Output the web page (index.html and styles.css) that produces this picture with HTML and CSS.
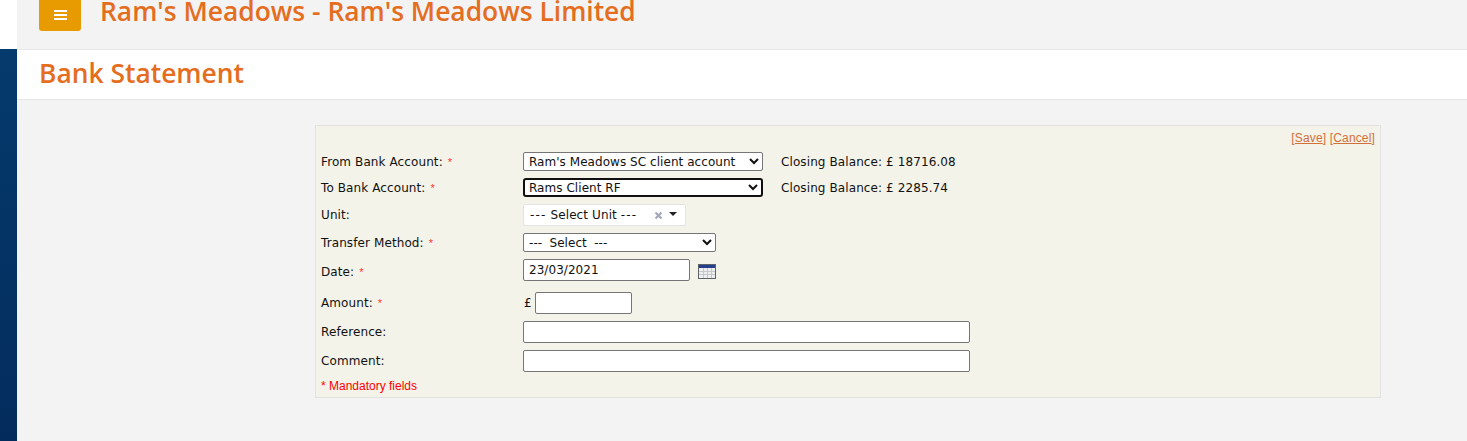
FILE: index.html
```html
<!DOCTYPE html>
<html lang="en">
<head>
    <meta charset="UTF-8">
    <title>Bank Statement</title>
    <link rel="stylesheet" href="styles.css">
</head>
<body>
    <div class="sidebar">
        <div class="sidebar-top"></div>
        <div class="sidebar-nav"></div>
    </div>
    <div class="main">
        <div class="topbar">
            <a class="menu-btn" href="#">
                <span></span><span></span><span></span>
            </a>
            <h2 class="site-title">Ram's Meadows - Ram's Meadows Limited</h2>
        </div>
        <div class="page-head">
            <h1>Bank Statement</h1>
        </div>
        <div class="content">
            <form class="panel">
                <div class="actions">
                    <a href="#">[<u>Save</u>]</a> <a href="#">[<u>Cancel</u>]</a>
                </div>
                <div class="row row-from">
                    <label>From Bank Account: <i>*</i></label>
                    <select class="sel-account"><option>Ram's Meadows SC client account</option></select>
                    <span class="balance">Closing Balance: £ 18716.08</span>
                </div>
                <div class="row row-to">
                    <label>To Bank Account: <i>*</i></label>
                    <select class="sel-account focused"><option>Rams Client RF</option></select>
                    <span class="balance">Closing Balance: £ 2285.74</span>
                </div>
                <div class="row row-unit">
                    <label>Unit:</label>
                    <div class="combo">
                        <span class="combo-text"><b>---</b> Select Unit <b>---</b></span>
                        <svg class="combo-x" width="9" height="9" viewBox="0 0 9 9"><path d="M1.5 1.5l6 6M7.5 1.5l-6 6" stroke="#a2a8b8" stroke-width="2.2" fill="none"/></svg>
                        <span class="combo-arrow"></span>
                    </div>
                </div>
                <div class="row row-method">
                    <label>Transfer Method: <i>*</i></label>
                    <select class="sel-method"><option>--- Select ---</option></select>
                </div>
                <div class="row row-date">
                    <label>Date: <i>*</i></label>
                    <input class="inp-date" type="text" value="23/03/2021">
                    <svg class="cal" width="18" height="15" viewBox="0 0 18 15">
                        <rect x="0" y="0" width="18" height="15" fill="#5f6368"/>
                        <rect x="1" y="1" width="16" height="3" fill="#24408c"/>
                        <rect x="1" y="4" width="16" height="10" fill="#eceef0"/>
                        <path d="M1 7.5h16M1 10.5h16M5.5 4v10M9.5 4v10M13.5 4v10" stroke="#c4c8cc" stroke-width="1" fill="none"/>
                    </svg>
                </div>
                <div class="row row-amount">
                    <label>Amount: <i>*</i></label>
                    <span class="pound">£</span>
                    <input class="inp-amount" type="text">
                </div>
                <div class="row row-ref">
                    <label>Reference:</label>
                    <input class="inp-wide" type="text">
                </div>
                <div class="row row-comment">
                    <label>Comment:</label>
                    <input class="inp-wide" type="text">
                </div>
                <div class="mandatory">* Mandatory fields</div>
            </form>
        </div>
    </div>
</body>
</html>
```

FILE: styles.css
```css
html, body {
    height: 100%;
}
body {
    margin: 0;
    display: flex;
    overflow: hidden;
    background-color: #f3f3f3;
    font-family: 'DejaVu Sans', Verdana, sans-serif;
    font-size: 12px;
    letter-spacing: 0.1px;
    color: #111;
}

/* left edge */
.sidebar {
    width: 17px;
    flex-shrink: 0;
    display: flex;
    flex-direction: column;
}
.sidebar-top {
    height: 49px;
    background-color: #fff;
}
.sidebar-nav {
    flex: 1;
    background: linear-gradient(#053a6d, #032c5c);
}

.main {
    flex: 1;
    min-width: 0;
}
.topbar {
    height: 49px;
    display: flex;
    box-sizing: border-box;
    padding-left: 22px;
    overflow: hidden;
}
.menu-btn {
    width: 42px;
    height: 40px;
    box-sizing: border-box;
    padding-top: 7px;
    margin-top: -9px;
    flex-shrink: 0;
    background-color: #e89b00;
    border-radius: 3px;
    display: flex;
    flex-direction: column;
    justify-content: center;
    align-items: center;
    gap: 2px;
}
.menu-btn span {
    width: 13px;
    height: 2px;
    background-color: #fff;
}
.site-title {
    margin: -7px 0 0 19px;
    font-family: 'Open Sans', sans-serif;
    font-size: 26.4px;
    font-weight: 600;
    letter-spacing: 0;
    line-height: 36px;
    color: #e46d1e;
}
.page-head {
    height: 51px;
    box-sizing: border-box;
    padding-left: 22px;
    background-color: #fff;
    border-top: 1px solid #e6e6e6;
    border-bottom: 1px solid #e6e6e6;
}
.page-head h1 {
    margin: 0;
    font-family: 'Open Sans', sans-serif;
    font-size: 26.4px;
    font-weight: 600;
    letter-spacing: 0;
    line-height: 46px;
    color: #e46d1e;
}
.content {
    padding: 25px 86px 0 298px;
}
.panel {
    height: 273px;
    box-sizing: border-box;
    padding: 0 5px;
    background-color: #f4f3ea;
    border: 1px solid #e2e2e0;
}
.actions {
    height: 26px;
    text-align: right;
    font-family: 'Liberation Sans', Arial, sans-serif;
    font-size: 12px;
    letter-spacing: 0.15px;
    line-height: 24px;
}
.actions a {
    color: #d2703a;
    text-decoration: none;
}

.row {
    display: flex;
    align-items: center;
}
.row label {
    width: 202px;
    flex-shrink: 0;
}
.row label i {
    font-family: 'Liberation Sans', Arial, sans-serif;
    font-size: 11px;
    font-style: normal;
    color: #f33;
    margin-left: 1px;
}
.row-from { height: 19px; }
.row-to { height: 19px; margin-top: 7px; }
.row-unit { height: 22px; margin-top: 7px; }
.row-method { height: 19px; margin-top: 7px; }
.row-date { height: 22px; margin-top: 7px; }
.row-date label { padding-top: 4px; }
.row-amount { height: 22px; margin-top: 11px; }
.row-ref { height: 22px; margin-top: 7px; }
.row-comment { height: 22px; margin-top: 7px; }

select, input {
    box-sizing: border-box;
    margin: 0;
    font-family: inherit;
    font-size: 12px;
    letter-spacing: 0.05px;
    color: #111;
    background-color: #fff;
    border: 1px solid #767676;
    border-radius: 2px;
}
select {
    padding-left: 1px;
}
.sel-account {
    width: 240px;
    height: 19px;
}
.focused {
    border: 2px solid #101010;
    border-radius: 3px;
    padding-left: 0;
}
.sel-method {
    width: 193px;
    height: 19px;
    word-spacing: 3.5px;
}
.balance {
    margin-left: 18px;
}
.combo {
    width: 163px;
    height: 22px;
    box-sizing: border-box;
    display: flex;
    align-items: center;
    background-color: #fff;
    border: 1px solid #e4e4e4;
    border-radius: 2px;
    padding-left: 6px;
}
.combo-text {
    width: 124px;
    white-space: nowrap;
}
/* hyphens are narrower here than in the original font */
.combo-text b {
    font-weight: normal;
    letter-spacing: 1.2px;
}
.combo-x {
    flex-shrink: 0;
}
.combo-arrow {
    width: 0;
    height: 0;
    margin: -3px 0 0 6px;
    border-left: 4px solid transparent;
    border-right: 4px solid transparent;
    border-top: 4px solid #222;
}
.inp-date {
    width: 167px;
    height: 22px;
    padding: 0 4px 0 5px;
}
.cal {
    margin: 2px 0 0 8px;
}
.pound {
    width: 12px;
    flex-shrink: 0;
    padding-left: 1px;
    box-sizing: border-box;
}
.inp-amount {
    width: 97px;
    height: 22px;
}
.inp-wide {
    width: 447px;
    height: 22px;
}
.mandatory {
    margin-top: 7px;
    font-family: 'Liberation Sans', Arial, sans-serif;
    font-size: 12px;
    letter-spacing: 0;
    color: #f00;
}
```
